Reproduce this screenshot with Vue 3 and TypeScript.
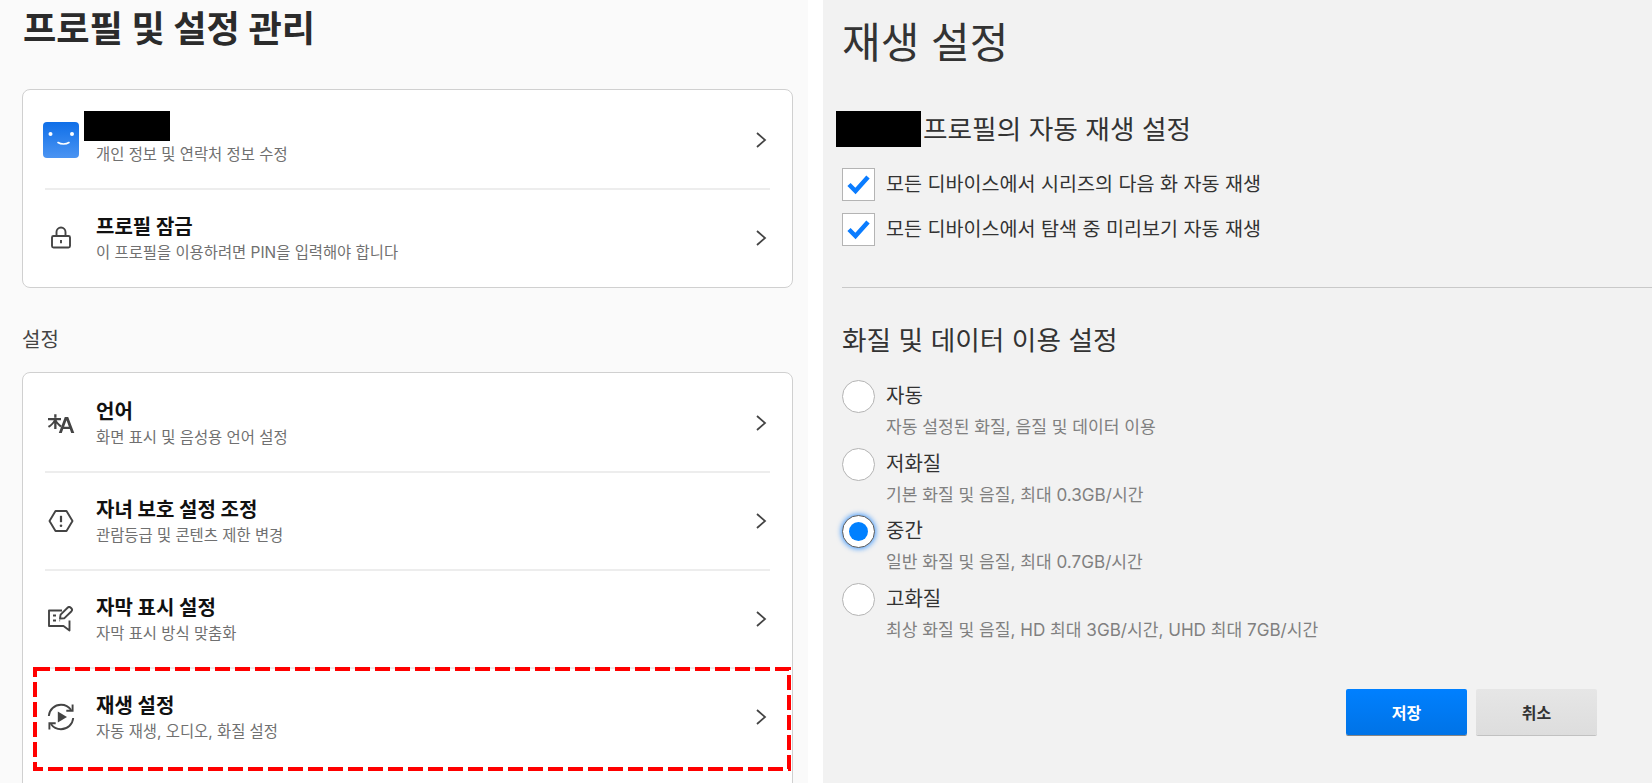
<script setup lang="ts">
interface Row { title: string; sub: string; icon: string }
const settings: Row[] = [
  { title: '언어', sub: '화면 표시 및 음성용 언어 설정', icon: 'lang' },
  { title: '자녀 보호 설정 조정', sub: '관람등급 및 콘텐츠 제한 변경', icon: 'alert' },
  { title: '자막 표시 설정', sub: '자막 표시 방식 맞춤화', icon: 'subs' },
  { title: '재생 설정', sub: '자동 재생, 오디오, 화질 설정', icon: 'play' },
]
const checks = ['모든 디바이스에서 시리즈의 다음 화 자동 재생', '모든 디바이스에서 탐색 중 미리보기 자동 재생']
const radios = [
  { label: '자동', desc: '자동 설정된 화질, 음질 및 데이터 이용', on: false },
  { label: '저화질', desc: '기본 화질 및 음질, 최대 0.3GB/시간', on: false },
  { label: '중간', desc: '일반 화질 및 음질, 최대 0.7GB/시간', on: true },
  { label: '고화질', desc: '최상 화질 및 음질, HD 최대 3GB/시간, UHD 최대 7GB/시간', on: false },
]
</script>

<template>
  <div class="page">
    <section class="left">
      <h1 class="main-title">프로필 및 설정 관리</h1>
      <div class="card first">
        <div class="row">
          <svg class="avatar" width="36" height="36" viewBox="0 0 36 36">
            <defs>
              <linearGradient id="av" x1="0" y1="0" x2="0" y2="1">
                <stop offset="0" stop-color="#0f6fe8" />
                <stop offset="1" stop-color="#4b94f2" />
              </linearGradient>
            </defs>
            <rect width="36" height="36" rx="4" fill="url(#av)" />
            <circle cx="7.5" cy="12" r="2" fill="#fff" />
            <circle cx="29" cy="12" r="2" fill="#fff" />
            <path d="M15 20.5c3 2 8 2 11 0" fill="none" stroke="#fff" stroke-width="1.6" stroke-linecap="round" />
          </svg>
          <div class="text">
            <div class="title">&nbsp;</div>
            <div class="sub">개인 정보 및 연락처 정보 수정</div>
          </div>
          <svg class="chev" width="12" height="18" viewBox="0 0 12 18"><path d="M2 2l8 7-8 7" /></svg>
          <div class="mask mask-name"></div>
        </div>
        <div class="row">
          <svg class="ico" width="28" height="26" viewBox="0 0 28 26" fill="none" stroke="#444" stroke-width="1.9">
            <path d="M9.500 11V7a4.500 4.500 0 0 1 9 0v4" />
            <rect x="5" y="11" width="18" height="11.500" rx="1.500" />
            <path d="M14 15v3.200" />
          </svg>
          <div class="text">
            <div class="title">프로필 잠금</div>
            <div class="sub">이 프로필을 이용하려면 PIN을 입력해야 합니다</div>
          </div>
          <svg class="chev" width="12" height="18" viewBox="0 0 12 18"><path d="M2 2l8 7-8 7" /></svg>
        </div>
      </div>

      <div class="section-label">설정</div>

      <div class="card second">
        <div v-for="r in settings" :key="r.title" class="row">
          <svg v-if="r.icon === 'lang'" class="ico" width="28" height="26" viewBox="0 0 28 26" fill="#444">
            <path d="M1 8h13v2.200H9.600c1.300 2.400 3 4.100 5 5.300l-1.200 1.900c-1.500-1-2.800-2.300-3.900-3.800V19H7.200v-5.900C5.900 15 4.100 16.600 2 17.800l-1.100-1.900c2.700-1.200 4.700-3.100 5.900-5.700H1zM7.200 4.200h2.300v3.600H7.200z" />
            <path d="M17.800 7h3.400l6.100 16h-3.100l-1.400-3.900h-6.600L14.800 23h-3zM19.500 10.200l-2.400 6.600h4.800z" />
          </svg>
          <svg v-else-if="r.icon === 'alert'" class="ico" width="26" height="24" viewBox="0 0 26 24" fill="none" stroke="#444" stroke-width="1.900">
            <path d="M7.500 2h11L24.500 12l-6 10h-11L1.500 12z" stroke-linejoin="round" />
            <path d="M13 6.800v6.400" stroke-width="2.200" />
            <circle cx="13" cy="16.800" r="1.300" fill="#444" stroke="none" />
          </svg>
          <svg v-else-if="r.icon === 'subs'" class="ico" width="28" height="26" viewBox="0 0 28 26" fill="none" stroke="#444" stroke-width="1.900">
            <path d="M15 4.500H2v15.500h14.500l6 4.500v-10" stroke-linejoin="round" />
            <path d="M6 9.500h3M6 14.500h3M12.500 14.500h.6" />
            <path d="M13 12.500l.6-3.800L20.800 1.500c.8-.7 1.900-.7 2.700 0l1 1c.7.800.7 1.900 0 2.700l-7.300 7.200z" stroke-linejoin="round" />
          </svg>
          <svg v-else class="ico" width="28" height="28" viewBox="0 0 28 28" fill="none" stroke="#444" stroke-width="1.900">
            <path d="M1.800 13C2.300 6.700 7.500 1.800 14 1.800c4.200 0 7.900 2 10.100 5.200" />
            <path d="M25.600 1.500v6.300h-6.300" />
            <path d="M26.200 15c-.5 6.300-5.700 11.200-12.200 11.200-4.200 0-7.900-2-10.100-5.200" />
            <path d="M2.400 26.500v-6.300h6.300" />
            <path d="M10.800 8.400l9.200 5.600-9.200 5.600z" fill="#444" stroke="none" />
          </svg>
          <div class="text">
            <div class="title">{{ r.title }}</div>
            <div class="sub">{{ r.sub }}</div>
          </div>
          <svg class="chev" width="12" height="18" viewBox="0 0 12 18"><path d="M2 2l8 7-8 7" /></svg>
        </div>
      </div>

      <svg class="dash" width="758" height="104" viewBox="0 0 758 104">
        <rect x="2" y="2" width="754" height="100" fill="none" stroke="#ff0000" stroke-width="4" stroke-dasharray="15 5" />
      </svg>
    </section>

    <div class="gap"></div>

    <section class="right">
      <h1 class="play-title">재생 설정</h1>
      <h2 class="h2 profile-h">프로필의 자동 재생 설정</h2>
      <div class="mask mask-profile"></div>
      <div class="checks">
        <label v-for="c in checks" :key="c" class="check">
          <span class="box">
            <svg width="25" height="21" viewBox="0 0 25 21"><path d="M3 10.500l6.500 6.500L22 3" fill="none" stroke="#0a7cff" stroke-width="4.500" /></svg>
          </span>
          <span class="check-label">{{ c }}</span>
        </label>
      </div>
      <hr class="rule" />
      <h2 class="h2 quality-h">화질 및 데이터 이용 설정</h2>
      <div class="radios">
        <div v-for="r in radios" :key="r.label" class="radio-row">
          <span class="radio" :class="{ on: r.on }"><span v-if="r.on" class="dot"></span></span>
          <div class="radio-text">
            <div class="radio-label">{{ r.label }}</div>
            <div class="radio-desc">{{ r.desc }}</div>
          </div>
        </div>
      </div>
      <div class="actions">
        <button class="btn save">저장</button>
        <button class="btn cancel">취소</button>
      </div>
    </section>
  </div>
</template>

<style>
html, body { margin: 0; overflow: hidden; }
</style>

<style scoped>
.page {
  display: flex;
  width: 1652px;
  height: 783px;
  overflow: hidden;
  background: #fff;
  font-family: "Inter", "Noto Sans CJK KR", sans-serif;
}
.left {
  position: relative;
  width: 808px;
  height: 783px;
  box-sizing: border-box;
  padding: 0 15px 0 22px;
  background: #fafafa;
  overflow: hidden;
  flex: none;
}
.gap { width: 15px; flex: none; }
.main-title {
  margin: 0;
  height: 89px;
  padding-left: 1px;
  font-size: 36.200px;
  line-height: 58px;
  font-weight: 700;
  color: #2b2b2b;
}
.card {
  background: #fff;
  border: 1px solid #d0d0d0;
  border-radius: 8px;
  padding: 0 22px;
}
.first { height: 199px; box-sizing: border-box; }
.row {
  position: relative;
  display: flex;
  align-items: center;
  box-sizing: border-box;
  height: 98px;
  border-bottom: 2px solid #ededed;
}
.row:first-child { height: 100px; padding-top: 1px; }
.row:last-child { height: 96px; border-bottom: 0; }
.avatar { flex: none; margin-left: -2px; margin-right: 17px; }
.ico { flex: none; width: 28px; margin-right: 21px; margin-left: 2px; }
.text { flex: 1; min-width: 0; }
.title {
  font-size: 20px;
  line-height: 30px;
  font-weight: 700;
  color: #111;
}
.sub {
  font-size: 15.400px;
  line-height: 22px;
  color: #707070;
}
.chev { flex: none; margin-right: 3px; }
.chev path { fill: none; stroke: #444; stroke-width: 1.800; }
.mask { position: absolute; background: #000; }
.mask-name { left: 39px; top: 21px; width: 86px; height: 30px; }
.section-label {
  height: 84px;
  box-sizing: border-box;
  padding-top: 37px;
  font-size: 20px;
  line-height: 30px;
  color: #444;
}
.second { height: 440px; box-sizing: border-box; }
.dash { position: absolute; left: 33px; top: 667px; }

.right {
  position: relative;
  flex: 1;
  min-width: 0;
  height: 783px;
  box-sizing: border-box;
  padding-left: 19px;
  background: #f2f2f2;
  overflow: hidden;
}
.play-title {
  margin: 0;
  height: 108px;
  font-size: 42px;
  line-height: 85px;
  font-weight: 400;
  color: #333;
}
.h2 {
  margin: 0;
  font-size: 26.700px;
  line-height: 38px;
  font-weight: 400;
  color: #333;
}
.profile-h { padding-left: 81px; padding-top: 2px; }
.mask-profile { left: 13px; top: 111px; width: 85px; height: 36px; }
.checks { display: flex; flex-direction: column; gap: 12px; margin-top: 20px; }
.check { display: flex; align-items: center; gap: 11px; height: 33px; }
.box {
  width: 33px;
  height: 33px;
  box-sizing: border-box;
  background: #fff;
  border: 1px solid #b4b4b4;
  display: flex;
  align-items: center;
  justify-content: center;
}
.check-label { font-size: 19.570px; line-height: 33px; color: #333; }
.rule {
  margin: 41px 0 0;
  border: 0;
  height: 1px;
  background: #c9c9c9;
}
.quality-h { margin-top: 33px; }
.radios { margin-top: 21px; display: flex; flex-direction: column; }
.radio-row { display: flex; gap: 11px; height: 67.670px; }
.radio {
  width: 33px;
  height: 33px;
  box-sizing: border-box;
  flex: none;
  border-radius: 50%;
  background: #fff;
  border: 1px solid #b4b4b4;
  display: flex;
  align-items: center;
  justify-content: center;
}
.radio.on { border-color: #5a5a5a; box-shadow: 0 0 5px 1px rgba(10, 124, 255, .7); }
.dot { width: 19px; height: 19px; border-radius: 50%; background: #0080ff; }
.radio-label { font-size: 20px; line-height: 33px; color: #333; }
.radio-desc { font-size: 17.100px; line-height: 28px; color: #808080; }
.actions { display: flex; gap: 9px; position: absolute; left: 523px; top: 689px; }
.btn {
  width: 121px;
  height: 46px;
  border: 0;
  border-radius: 2px;
  font-family: inherit;
  font-size: 16px;
  font-weight: 700;
}
.save {
  color: #fff;
  background: linear-gradient(#0080ff, #0073e6);
  box-shadow: 0 1px 0 rgba(0, 0, 0, .45);
}
.cancel {
  color: #333;
  background: linear-gradient(#e6e6e6, #ddd);
  box-shadow: 0 1px 0 rgba(0, 0, 0, .2);
}
</style>
